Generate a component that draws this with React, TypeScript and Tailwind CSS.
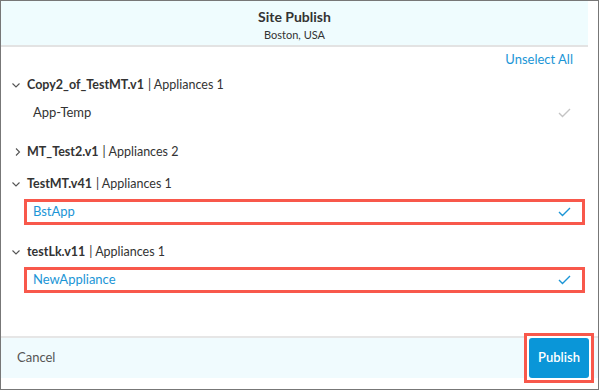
import React from "react";

const Chevron = ({ open }: { open: boolean }) => (
  <svg width="10" height="10" viewBox="0 0 10 10" className="shrink-0">
    {open ? (
      <polyline points="1.5,3.5 5,7 8.5,3.5" fill="none" stroke="#555" strokeWidth="1.1" />
    ) : (
      <polyline points="5,1.5 8.5,5 5,8.5" fill="none" stroke="#555" strokeWidth="1.1" />
    )}
  </svg>
);

const Check = ({ color }: { color: string }) => (
  <svg width="13" height="10" viewBox="0 0 13 10">
    <polyline points="1,5 4.5,8.5 12,1" fill="none" stroke={color} strokeWidth="1.4" />
  </svg>
);

const GroupHeader = ({ name, count, open }: { name: string; count: number; open: boolean }) => (
  <div className="flex h-[24px] items-center pl-[10px] text-[12.5px] text-[#333]">
    <Chevron open={open} />
    <span className="ml-[6px] font-bold">{name}</span>
    <span className="ml-[4px]">| Appliances {count}</span>
  </div>
);

const Item = ({ name, selected }: { name: string; selected: boolean }) => (
  <div
    className={
      "ml-[23px] mr-[13px] mt-[3px] flex h-[26px] items-center justify-between pl-[6px] pr-[11px] text-[13px] " +
      (selected ? "border-[3px] border-[#f8584b] text-[#1b95d6]" : "border-[3px] border-transparent text-[#333]")
    }
  >
    <span>{name}</span>
    <Check color={selected ? "#1b95d6" : "#c4c4c4"} />
  </div>
);

export default function App() {
  return (
    <div className="w-[600px] h-[392px] bg-white" style={{ fontFamily: "Lato, 'Open Sans', sans-serif" }}>
      <div className="flex h-[390px] w-[599px] flex-col border border-[#777] bg-white">
        <div className="flex h-[46px] w-[587px] flex-col items-center border-b-2 border-[#e3e3e3] bg-[#effcfe] pt-[7px]">
          <div className="text-[14px] font-bold leading-[18px] text-[#333]">Site Publish</div>
          <div className="mt-[1px] text-[11px] leading-[15px] text-[#333]">Boston, USA</div>
        </div>
        <div className="flex-1">
          <div className="mt-[4px] flex h-[18px] items-center justify-end pr-[25px] text-[13px] text-[#1b95d6]">
            Unselect All
          </div>
          <div className="mt-[4px]">
            <GroupHeader name="Copy2_of_TestMT.v1" count={1} open={true} />
            <Item name="App-Temp" selected={false} />
          </div>
          <div className="mt-[14px]">
            <GroupHeader name="MT_Test2.v1" count={2} open={false} />
          </div>
          <div className="mt-[8px]">
            <GroupHeader name="TestMT.v41" count={1} open={true} />
            <Item name="BstApp" selected={true} />
          </div>
          <div className="mt-[15px]">
            <GroupHeader name="testLk.v11" count={1} open={true} />
            <Item name="NewAppliance" selected={true} />
          </div>
        </div>
        <div className="flex h-[42px] items-center justify-between border-t-2 border-[#e6e6e6] bg-[#f0fbfe] pl-[16px] pr-[4px]">
          <span className="text-[13px] text-[#555]">Cancel</span>
          <div className="flex h-[50px] w-[70px] shrink-0 items-center justify-center border-[3px] border-[#f8584b] bg-white">
            <button className="h-[40px] w-[60px] rounded-[3px] bg-[#0a96d8] text-[13px] font-semibold text-white">
              Publish
            </button>
          </div>
        </div>
        <div className="h-[11px]" />
      </div>
    </div>
  );
}
